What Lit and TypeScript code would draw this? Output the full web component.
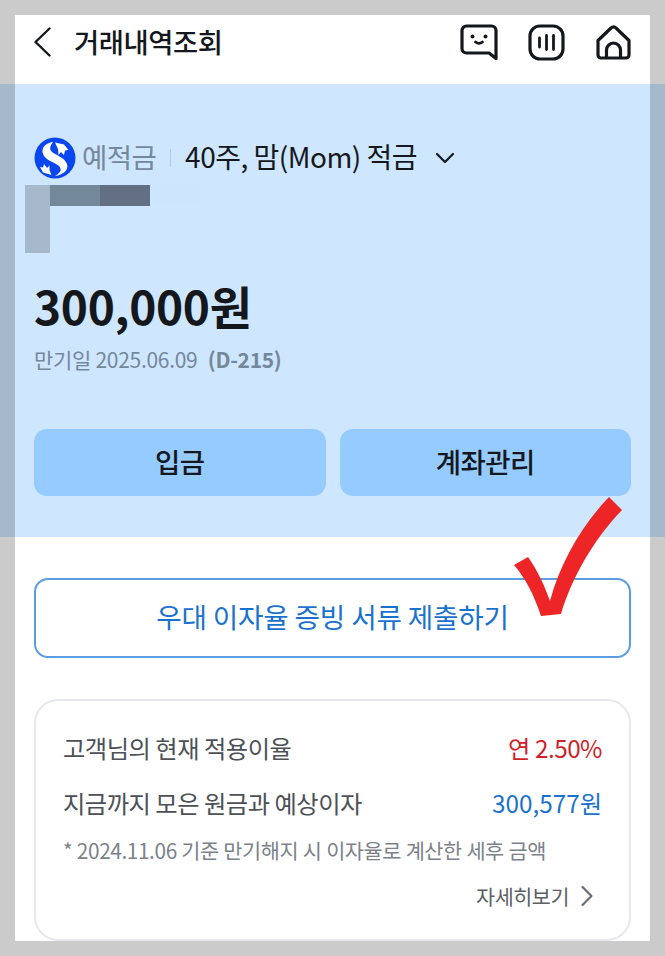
import { LitElement, html, css } from 'lit';
import { customElement } from 'lit/decorators.js';

@customElement('app-root')
export class AppRoot extends LitElement {
  static styles = css`
    :host {
      display: block;
      position: relative;
      height: 956px;
      overflow: hidden;
      background: #cbcbcb;
      padding-top: 15px;
      box-sizing: border-box;
      font-family: "Noto Sans CJK KR", "Noto Sans", sans-serif;
      color: #14181d;
    }
    .header {
      margin: 0 15px;
      height: 69px;
      background: #fff;
      display: flex;
      align-items: center;
      padding: 0 19px 15px 18px;
      box-sizing: border-box;
    }
    .back { width: 19px; height: 30px; margin-right: 22px; }
    .title { font-size: 27.4px; font-weight: 500; letter-spacing: -0.45px; line-height: 1; flex: 1; }
    .tools { display: flex; align-items: center; gap: 30px; }
    .tools .home { margin-left: 1px; }
    .band { background: #a6b9cb; padding: 0 15px; }
    .band-inner {
      position: relative;
      height: 453px;
      background: #cfe6ff;
      padding: 53px 19px 0;
      box-sizing: border-box;
      display: flex;
      flex-direction: column;
    }
    .product { display: flex; align-items: center; height: 42px; }
    .logo { width: 42px; height: 42px; margin-right: 6px; flex: none; }
    .kind { font-size: 27.5px; color: #73889b; letter-spacing: -0.6px; margin-bottom: 4px; }
    .sep { width: 1px; height: 18px; background: #bccbd9; margin: 0 14px 0 14px; }
    .name { font-size: 28px; letter-spacing: -0.5px; margin-bottom: 4px; }
    .caret { width: 20px; height: 12px; margin-left: 18px; }
    .amount { font-size: 46px; font-weight: 700; line-height: 60px; margin-top: 96px; letter-spacing: -0.3px; }
    .due { font-size: 21px; line-height: 28px; margin-top: 10px; color: #73889b; letter-spacing: -0.3px; }
    .due b { font-weight: 700; margin-left: 6px; letter-spacing: -0.3px; }
    .actions { display: flex; gap: 14px; margin-top: 56px; }
    .action {
      flex: 1;
      height: 67px;
      border-radius: 13px;
      background: #96cbff;
      display: flex;
      align-items: center;
      justify-content: center;
      font-size: 27.5px;
      font-weight: 500;
      letter-spacing: -0.5px;
      padding-bottom: 3px;
      box-sizing: border-box;
    }
    .mosaic { position: absolute; }
    .m1 { left: 10px; top: 101px; width: 25px; height: 68px; background: #a6b8ca; }
    .m2 { left: 35px; top: 101px; width: 50px; height: 21px; background: #73889b; }
    .m3 { left: 85px; top: 101px; width: 50px; height: 21px; background: #636f82; }
    .m4 { left: 135px; top: 101px; width: 50px; height: 21px; background: #cde5fd; }
    .body {
      margin: 0 15px;
      height: 404px;
      background: #fff;
      overflow: hidden;
      padding: 41px 19px 0;
      box-sizing: border-box;
    }
    .submit {
      height: 80px;
      width: 597px;
      border: 2px solid #5c9de0;
      border-radius: 14px;
      box-sizing: border-box;
      display: flex;
      align-items: center;
      justify-content: center;
      padding-bottom: 4px;
      font-size: 27.7px;
      color: #1a72cf;
      letter-spacing: -0.2px;
    }
    .card {
      width: 597px;
      height: 242px;
      margin-top: 41px;
      border: 2px solid #e6e8ec;
      border-radius: 24px;
      box-sizing: border-box;
      padding: 24px 27px 0;
    }
    .row {
      display: flex;
      justify-content: space-between;
      align-items: center;
      height: 44px;
      font-size: 24.3px;
      color: #4c5157;
      letter-spacing: -0.5px;
    }
    .row + .row { margin-top: 11px; }
    .rate { color: #cf1f2a; }
    .total { color: #1a72cf; letter-spacing: 0; }
    .note { font-size: 20.8px; line-height: 30px; margin-top: 11px; color: #7b8289; letter-spacing: -0.4px; word-spacing: 0.3px; }
    .more {
      display: flex;
      justify-content: flex-end;
      align-items: center;
      gap: 11px;
      font-size: 20.7px;
      line-height: 30px;
      margin-top: 16px;
      padding-right: 8px;
      color: #5b6066;
      letter-spacing: -0.45px;
    }
    .more svg { width: 14px; height: 22px; }
    .check { position: absolute; left: 514px; top: 495px; width: 108px; height: 122px; }
  `;

  render() {
    return html`
      <div class="header">
        <svg class="back" viewBox="0 0 19 30" fill="none" stroke="#14181d" stroke-width="2.4" stroke-linecap="round" stroke-linejoin="round"><path d="M16.5 1.500 2.500 15 16.500 28.500"/></svg>
        <div class="title">거래내역조회</div>
        <div class="tools">
          <svg width="38" height="37" viewBox="0 0 38 37" fill="none" stroke="#14181d" stroke-width="3.200" stroke-linecap="round" stroke-linejoin="round">
            <path d="M6.500 2h25a4.500 4.500 0 0 1 4.500 4.500V34.500L29 29H6.500A4.500 4.500 0 0 1 2 24.500V6.500A4.500 4.500 0 0 1 6.500 2Z"/>
            <path d="M15.500 18q3.500 2.800 7 0" stroke-width="2.800"/>
            <circle cx="12.500" cy="12.500" r="2" fill="#14181d" stroke="none"/>
            <circle cx="25.500" cy="12.500" r="2" fill="#14181d" stroke="none"/>
          </svg>
          <svg width="37" height="37" viewBox="0 0 37 37" fill="none" stroke="#14181d" stroke-width="3.200" stroke-linecap="round">
            <rect x="2" y="2" width="33" height="33" rx="10"/>
            <path d="M11.500 14v9M18.500 11.500v14M25.500 11.500v14" stroke-width="2.800"/>
          </svg>
          <svg class="home" width="35" height="35" viewBox="0 0 35 35" fill="none" stroke="#14181d" stroke-width="3.200" stroke-linecap="round" stroke-linejoin="round">
            <path d="M2 15.500 15 3a3.500 3.500 0 0 1 5 0L33 15.500V30a3 3 0 0 1-3 3H5a3 3 0 0 1-3-3Z"/>
            <path d="M10.500 32.500V25a7 7 0 0 1 14 0v7.500"/>
          </svg>
        </div>
      </div>

      <div class="band">
        <div class="band-inner">
          <div class="product">
            <svg class="logo" viewBox="0 0 42 42">
              <circle cx="21" cy="21" r="20.500" fill="#0a46f0"/>
              <path d="M19 5C11 6 7 11 9 17c2 6 11 8 16 12 3 3 2 7-4 10 8-1 14-6 12-12-2-6-11-9-15-12-3-3-2-6 1-10Z" fill="#fff"/>
              <path d="M21 5.500 30 7.500 34.500 13 31 13.500 30 18 27 15 24.500 18 24 12Z" fill="#fff"/>
              <path d="M17.500 38 9 35.500 6 30 9 30.500 10 27 13 31 15.500 28.500 15.500 33Z" fill="#fff"/>
            </svg>
            <span class="kind">예적금</span>
            <span class="sep"></span>
            <span class="name">40주, 맘(Mom) 적금</span>
            <svg class="caret" viewBox="0 0 20 12" fill="none" stroke="#14181d" stroke-width="2.200" stroke-linecap="round" stroke-linejoin="round"><path d="M2 2l8 8 8-8"/></svg>
          </div>
          <div class="mosaic m1"></div>
          <div class="mosaic m2"></div>
          <div class="mosaic m3"></div>
          <div class="mosaic m4"></div>
          <div class="amount">300,000원</div>
          <div class="due">만기일 2025.06.09 <b>(D-215)</b></div>
          <div class="actions">
            <div class="action">입금</div>
            <div class="action">계좌관리</div>
          </div>
        </div>
      </div>

      <div class="body">
        <div class="submit">우대 이자율 증빙 서류 제출하기</div>
        <div class="card">
          <div class="row"><span>고객님의 현재 적용이율</span><span class="rate">연 2.50%</span></div>
          <div class="row"><span>지금까지 모은 원금과 예상이자</span><span class="total">300,577원</span></div>
          <div class="note">* 2024.11.06 기준 만기해지 시 이자율로 계산한 세후 금액</div>
          <div class="more">자세히보기
            <svg viewBox="0 0 14 22" fill="none" stroke="#6a6f75" stroke-width="2.200" stroke-linecap="round" stroke-linejoin="round"><path d="M2.500 2 11.500 11 2.500 20"/></svg>
          </div>
        </div>
      </div>

      <svg class="check" viewBox="0 0 108 122"><path fill="#ee2526" d="M0 70 14 62C24 76 31 92 36 106 46 68 68 30 95 2L108 15C80 44 58 82 47 119L27 121C20 100 12 84 0 70Z"/></svg>
    `;
  }
}
